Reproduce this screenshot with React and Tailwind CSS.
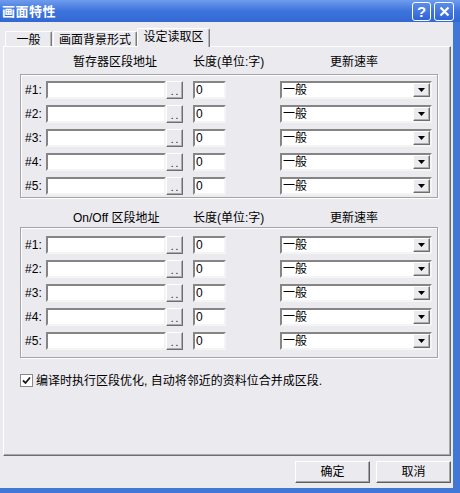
import React from "react";

const rows = [1, 2, 3, 4, 5];

const Sunken = ({ className = "", children }) => (
  <div
    className={`box-border h-[18px] bg-white border-2 border-t-[#858585] border-l-[#858585] border-b-[#f4f4f4] border-r-[#f4f4f4] ${className}`}
  >
    {children}
  </div>
);

const DotsButton = () => (
  <div className="box-border w-[17px] h-[18px] flex items-end justify-center pb-[2px] bg-[#ebeaef] border border-t-white border-l-white border-b-[#6e6e6e] border-r-[#6e6e6e] shadow-[inset_-1px_-1px_0_#acacac]">
    <span className="text-[10px] leading-[8px] tracking-[2px] pl-[2px]">..</span>
  </div>
);

const Combo = () => (
  <Sunken className="w-[152px] flex">
    <div className="flex-1 pl-[1px] text-[12px] leading-[14px]">一般</div>
    <div className="box-border w-[17px] h-[14px] flex items-center justify-center bg-[#ebeaef] border border-t-white border-l-white border-b-[#6e6e6e] border-r-[#6e6e6e] shadow-[inset_-1px_-1px_0_#acacac]">
      <svg width="7" height="4" viewBox="0 0 7 4">
        <path d="M0 0H7L3.5 4Z" fill="#000" />
      </svg>
    </div>
  </Sunken>
);

const Row = ({ n }) => (
  <div className="flex items-center h-[18px]">
    <span className="w-[21px] text-[12px] leading-[14px]">#{n}:</span>
    <Sunken className="w-[120px]" />
    <DotsButton />
    <Sunken className="w-[33px] ml-[10px] pl-[1px] text-[12px] leading-[14px]">0</Sunken>
    <div className="ml-[54px]">
      <Combo />
    </div>
  </div>
);

const GroupBox = ({ className = "" }) => (
  <div
    className={`box-border w-[418px] ml-[16px] pl-[4px] flex flex-col gap-[6px] border border-[#a3a3a8] shadow-[inset_1px_1px_0_#fff,1px_1px_0_#fff] ${className}`}
  >
    {rows.map((n) => (
      <Row key={n} n={n} />
    ))}
  </div>
);

const Header = ({ title, className = "" }) => (
  <div className={`flex h-[16px] leading-[16px] text-[12px] ml-[69px] ${className}`}>
    <span className="w-[120px] whitespace-nowrap">{title}</span>
    <span className="w-[137px] whitespace-nowrap">长度(单位:字)</span>
    <span className="whitespace-nowrap">更新速率</span>
  </div>
);

const Tab = ({ label, selected, className = "" }) => (
  <div
    className={`box-border flex items-center justify-center text-[12px] rounded-t-[2px] border-t border-l border-r border-t-white border-l-white border-r-[#7a7a7a] shadow-[inset_-1px_0_0_#b4b4b4] ${
      selected ? "h-[19px] -mb-px relative z-10 bg-[#ebeaef] pb-[2px]" : "h-[15px] pt-[1px]"
    } ${className}`}
  >
    {label}
  </div>
);

const WinButton = ({ label }) => (
  <div className="box-border w-[75px] h-[22px] flex items-center justify-center text-[12px] bg-[#ebeaef] border border-t-white border-l-white border-b-[#606060] border-r-[#606060] shadow-[inset_-1px_-1px_0_#a4a4a4]">
    {label}
  </div>
);

export default function App() {
  return (
    <div className="w-[460px] h-[493px] flex flex-col overflow-hidden bg-[#ebeaef] text-black font-['Liberation_Sans','Noto_Sans_CJK_SC',sans-serif]">
      {/* title bar */}
      <div className="h-[22px] shrink-0 flex items-center bg-gradient-to-b from-[#6f9cec] via-[#3d74dc] to-[#3367d2] pl-[2px] pr-[6px]">
        <span className="text-white font-bold text-[13px] tracking-[0.5px] font-['Noto_Sans_CJK_SC',sans-serif]">
          画面特性
        </span>
        <div className="ml-auto flex gap-[3px] pt-[1px]">
          <div className="w-[19px] h-[19px] rounded-[3px] border border-white bg-gradient-to-b from-[#5b8cec] to-[#2f63d6] flex items-center justify-center text-white font-bold text-[15px] leading-none">
            ?
          </div>
          <div className="w-[20px] h-[19px] rounded-[3px] border border-white bg-gradient-to-b from-[#5b8cec] to-[#2f63d6] flex items-center justify-center">
            <svg width="11" height="11" viewBox="0 0 11 11">
              <path d="M1.5 1.5L9.5 9.5M9.5 1.5L1.5 9.5" stroke="#fff" strokeWidth="2.2" />
            </svg>
          </div>
        </div>
      </div>

      {/* body */}
      <div className="flex-1 flex flex-col border-r-[7px] border-b-[5px] border-r-[#4177d6] border-b-[#4177d6] pl-[3px]">
        {/* tab strip */}
        <div className="flex items-end h-[18px] mt-[6px] pl-[2px]">
          <Tab label="一般" className="w-[47px]" />
          <Tab label="画面背景形式" className="w-[84px] ml-[1px]" />
          <Tab label="设定读取区" selected className="w-[73px]" />
        </div>

        {/* panel */}
        <div className="box-border w-[448px] h-[410px] flex flex-col border border-t-white border-l-white border-b-[#6e6e6e] border-r-[#6e6e6e] shadow-[inset_-1px_-1px_0_#a8a8a8]">
          <Header title="暂存器区段地址" className="mt-[7px]" />
          <GroupBox className="mt-[4px] pt-[6px] pb-[2px]" />
          <Header title="On/Off 区段地址" className="mt-[12px]" />
          <GroupBox className="mt-[1px] pt-[8px] pb-[7px]" />

          <div className="flex items-center ml-[16px] mt-[16px] h-[13px]">
            <div className="box-border w-[13px] h-[13px] bg-white border border-[#8a8a8a] flex items-center justify-center">
              <svg width="9" height="9" viewBox="0 0 9 9">
                <path d="M1 4.5L3.5 7L8 1.5" stroke="#1a1a1a" strokeWidth="1.8" fill="none" />
              </svg>
            </div>
            <span className="ml-[3px] text-[12px] leading-[14px] whitespace-nowrap">
              编译时执行区段优化, 自动将邻近的资料位合并成区段.
            </span>
          </div>
        </div>

        {/* buttons */}
        <div className="flex justify-end gap-[6px] pr-[2px] mt-[5px]">
          <WinButton label="确定" />
          <WinButton label="取消" />
        </div>
      </div>
    </div>
  );
}
